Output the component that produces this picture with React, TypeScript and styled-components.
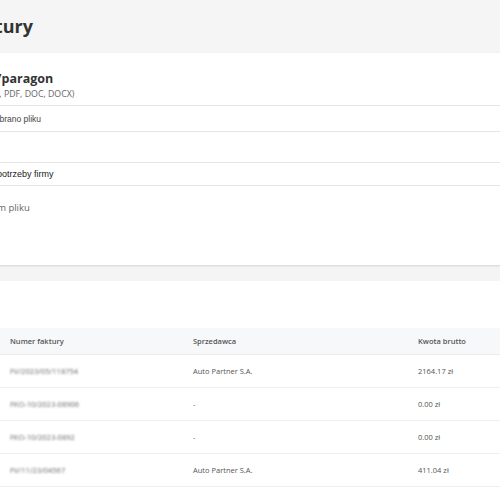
import styled, { createGlobalStyle } from 'styled-components';

const GlobalStyle = createGlobalStyle`
  html, body {
    margin: 0;
    padding: 0;
    background: #f4f4f4;
    font-family: 'Open Sans', 'Liberation Sans', sans-serif;
    color: #333;
  }
`;

type Invoice = {
  number: string;
  seller: string;
  amount: string;
};

const invoices: Invoice[] = [
  { number: 'FV/2023/05/118754', seller: 'Auto Partner S.A.', amount: '2164.17 zł' },
  { number: 'FKO-10/2023-08906', seller: '-', amount: '0.00 zł' },
  { number: 'FKO-10/2023-0892', seller: '-', amount: '0.00 zł' },
  { number: 'FV/11/23/04567', seller: 'Auto Partner S.A.', amount: '411.04 zł' },
];

const App = () => {
  return (
    <Page>
      <GlobalStyle />
      <Shifted>
        <Header>
          <PageTitle>Import faktury</PageTitle>
        </Header>
        <Card>
          <CardHead>
            <CardTitle>Dodaj fakturę/paragon</CardTitle>
            <CardSub>Wybierz plik (JPG, PNG, PDF, DOC, DOCX)</CardSub>
          </CardHead>
          <FileRow>
            <FileButton>Wybierz plik</FileButton>
            <FileName>Nie wybrano pliku</FileName>
          </FileRow>
          <EmptyRow />
          <SelectRow>
            <SelectLabel>Przeznaczenie:</SelectLabel>
            <SelectValue>Na potrzeby firmy</SelectValue>
          </SelectRow>
          <DropArea>Brak danych o wybranym pliku</DropArea>
        </Card>
      </Shifted>
      <ListSection>
        <Table>
          <HeadRow>
            <HeadCell>Numer faktury</HeadCell>
            <HeadCell>Sprzedawca</HeadCell>
            <HeadCell>Kwota brutto</HeadCell>
          </HeadRow>
          {invoices.map(inv => (
            <Row key={inv.number}>
              <Cell>
                <Blurred>{inv.number}</Blurred>
              </Cell>
              <Cell>{inv.seller}</Cell>
              <Cell>{inv.amount}</Cell>
            </Row>
          ))}
        </Table>
      </ListSection>
    </Page>
  );
};

const Page = styled.div`
  width: 500px;
  height: 500px;
  overflow: hidden;
  background: #f4f4f4;
`;

const Shifted = styled.div`
  margin-left: -120px;
  width: 620px;
`;

const Header = styled.header`
  height: 52px;
  display: flex;
  align-items: center;
  padding-left: 19px;
  background: #f5f5f5;
`;

const PageTitle = styled.h1`
  margin: 0;
  font-size: 18px;
  font-weight: 700;
  color: #333;
`;

const Card = styled.section`
  background: #fff;
  margin-top: 1px;
  height: 212px;
  box-shadow: 0 1px 2px rgba(0, 0, 0, 0.14);
  display: flex;
  flex-direction: column;
`;

const CardHead = styled.div`
  height: 53px;
  padding: 17px 0 0 20px;
  box-sizing: border-box;
  border-bottom: 1px solid #e6e6e6;
`;

const CardTitle = styled.h2`
  margin: 0 0 0 10px;
  font-size: 12.5px;
  line-height: 17px;
  font-weight: 700;
  color: #333;
`;

const CardSub = styled.div`
  margin-top: 1px;
  margin-left: 8px;
  font-size: 8.8px;
  color: #666;
`;

const FileRow = styled.div`
  height: 25px;
  display: flex;
  align-items: center;
  gap: 4px;
  padding-left: 22px;
  border-bottom: 1px solid #e6e6e6;
  font-family: 'Liberation Sans', Arial, sans-serif;
`;

const FileButton = styled.span`
  font-size: 8.5px;
  color: #333;
  padding: 1px 4px;
  border: 1px solid #ccc;
  border-radius: 2px;
  background: #f0f0f0;
  width: 58px;
`;

const FileName = styled.span`
  font-size: 8.5px;
  color: #444;
`;

const EmptyRow = styled.div`
  height: 30px;
  border-bottom: 1px solid #e6e6e6;
`;

const SelectRow = styled.div`
  height: 22px;
  display: flex;
  align-items: center;
  gap: 11px;
  padding-left: 24px;
  border-bottom: 1px solid #e6e6e6;
  font-family: 'Liberation Sans', Arial, sans-serif;
  font-size: 9px;
  color: #222;
`;

const SelectLabel = styled.span`
  width: 68px;
  color: #555;
`;

const SelectValue = styled.span`
  color: #222;
`;

const DropArea = styled.div`
  flex: 1;
  padding: 15px 0 0 14px;
  font-size: 9.5px;
  color: #666;
`;

const ListSection = styled.section`
  margin-top: 16px;
  background: #fff;
  padding-top: 47px;
  height: 220px;
`;

const Table = styled.div`
  display: flex;
  flex-direction: column;
`;

const HeadRow = styled.div`
  display: grid;
  grid-template-columns: 183px 225px 1fr;
  height: 26px;
  align-items: center;
  background: #f7f8f9;
  border-bottom: 1px solid #ececec;
`;

const HeadCell = styled.div`
  padding-left: 10px;
  font-size: 7.5px;
  font-weight: 600;
  color: #555;
`;

const Row = styled.div`
  display: grid;
  grid-template-columns: 183px 225px 1fr;
  height: 32px;
  align-items: center;
  border-bottom: 1px solid #eeeeee;
`;

const Cell = styled.div`
  padding-left: 10px;
  font-size: 7.5px;
  color: #555;
`;

const Blurred = styled.span`
  display: inline-block;
  filter: blur(1px);
  color: #666;
  font-size: 7.5px;
`;

export default App;
